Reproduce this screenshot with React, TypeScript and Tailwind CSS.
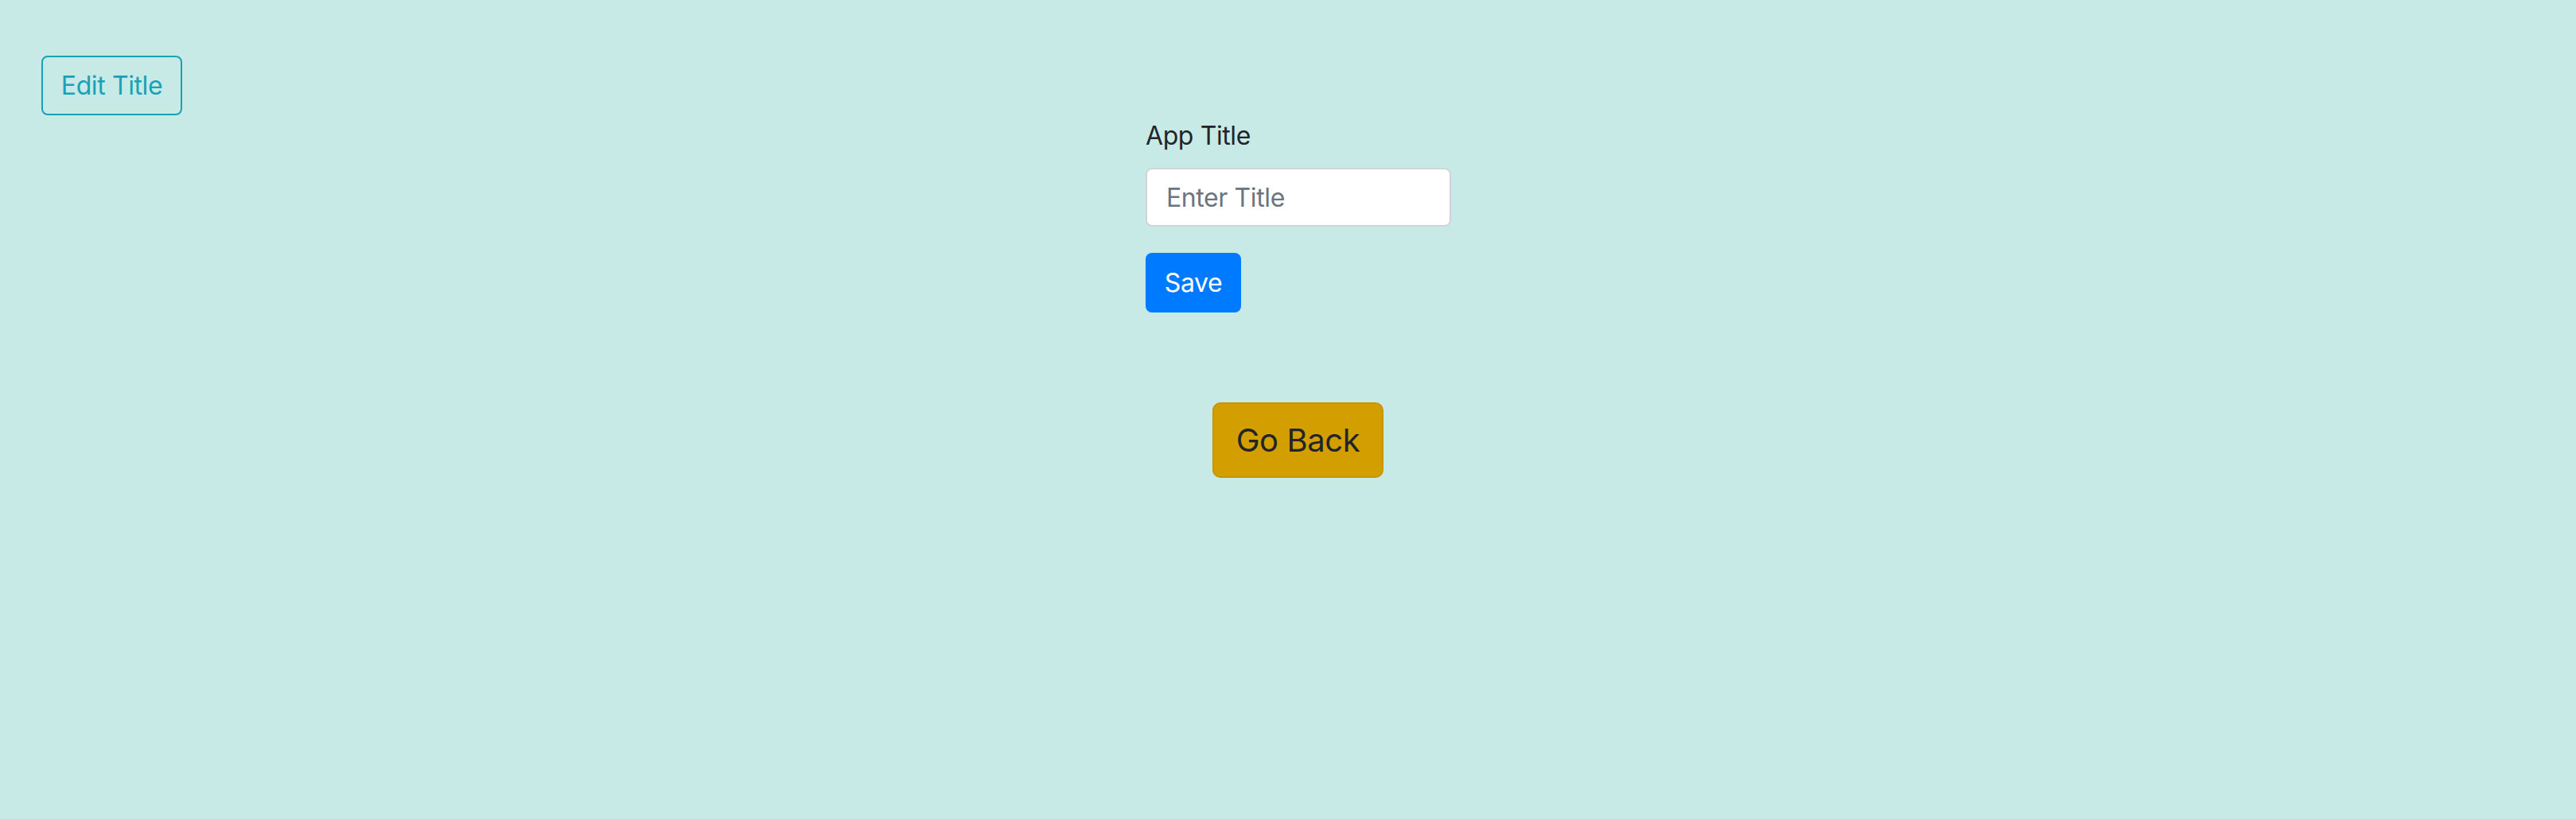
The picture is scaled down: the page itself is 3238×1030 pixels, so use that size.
export default function App() {
  return (
    <div className="min-h-[1030px] w-full bg-[#c8eae7] font-['Inter','Liberation_Sans',sans-serif] tracking-[-0.4px] text-[#212529]">
      {/* top bar */}
      <div className="pt-[70px] pl-[52px]">
        <button className="flex h-[75px] w-[177px] items-center justify-center rounded-[8px] border-2 border-[#17a2b8] text-[32px] text-[#17a2b8]">
          Edit Title
        </button>
      </div>

      {/* form */}
      <div className="mt-[2px] flex flex-col items-center pl-[26px]">
        <div className="flex w-[384px] flex-col">
          <label className="mb-[16px] text-[32px] leading-[48px]">App Title</label>
          <input
            type="text"
            placeholder="Enter Title"
            className="h-[74px] w-[384px] rounded-[8px] border-2 border-[#ced4da] bg-white px-[24px] text-[32px] text-[#495057] placeholder:text-[#6c757d] outline-none"
          />
          <button className="mt-[33px] flex h-[75px] w-[120px] items-center justify-center rounded-[8px] bg-[#007bff] text-[32px] text-white">
            Save
          </button>
        </div>

        <button className="ml-[-1px] mt-[113px] flex h-[95px] w-[215px] items-center justify-center rounded-[10px] border-2 border-[#c69500] bg-[#d39e00] text-[40px] text-[#212529]">
          Go Back
        </button>
      </div>
    </div>
  );
}
